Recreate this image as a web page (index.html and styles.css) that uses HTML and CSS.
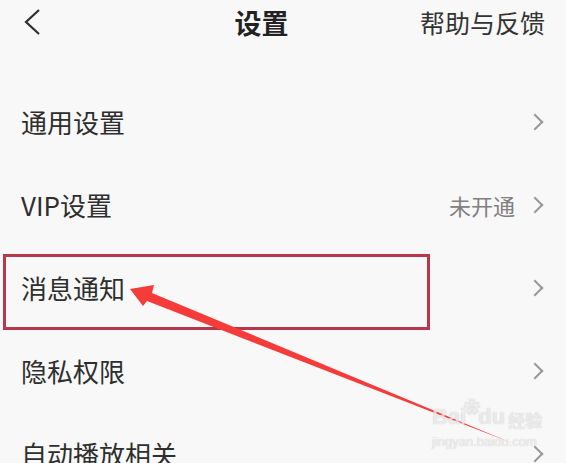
FILE: index.html
```html
<!DOCTYPE html>
<html lang="zh-CN">
<head>
<meta charset="UTF-8" />
<meta name="viewport" content="width=device-width, initial-scale=1" />
<title>设置</title>
<link rel="stylesheet" href="styles.css">
</head>
<body>

<div class="page">
  <header class="top-bar">
    <span class="back">
      <svg width="18" height="26" viewBox="0 0 18 26"><path d="M16 1 L3 13 L16 25" fill="none" stroke="#2e2e2e" stroke-width="2.2"/></svg>
    </span>
    <h1 class="title">设置</h1>
    <span class="help">帮助与反馈</span>
  </header>

  <ul class="menu">
    <li class="row"><span class="label">通用设置</span><span class="right"><i class="chev"></i></span></li>
    <li class="row"><span class="label">VIP设置</span><span class="right"><span class="note">未开通</span><i class="chev"></i></span></li>
    <li class="row marked"><span class="label">消息通知</span><span class="right"><i class="chev"></i></span>
      <div class="red-box"></div>
    </li>
    <li class="row"><span class="label">隐私权限</span><span class="right"><i class="chev"></i></span></li>
    <li class="row"><span class="label">自动播放相关</span><span class="right"><i class="chev"></i></span></li>
  </ul>

  <!-- annotation arrow -->
  <svg class="arrow" width="566" height="463" viewBox="0 0 566 463">
    <polygon points="130,289 154,285 152,293 512,443 147,301 143,306" fill="#f63b3b"/>
  </svg>

  <div class="watermark">
    <div class="wm-top"><span>Bai</span><span class="paw">❀</span><span>du</span><span class="wm-cn">经验</span></div>
    <div class="wm-url">jingyan.baidu.com</div>
  </div>
</div>

</body>
</html>
```

FILE: styles.css
```css
body {
  margin: 0;
  background: #f8f8f8;
  font-family: "Noto Sans CJK SC", "Noto Sans", sans-serif;
  color: #2e2e2e;
}
.page {
  position: relative;
  width: 566px;
  height: 463px;
  overflow: hidden;
}
.top-bar {
  display: grid;
  grid-template-columns: 18px 1fr auto;
  align-items: center;
  height: 44px;
  padding: 0 21px 0 23px;
}
.back {
  display: flex;
  align-items: center;
}
.title {
  margin: 0;
  padding-left: 62px;
  text-align: center;
  font-size: 27px;
  font-weight: 700;
  color: #222;
}
.help {
  font-size: 25px;
  color: #333;
}
.menu {
  list-style: none;
  margin: 0;
  padding: 36px 0 0;
}
.row {
  position: relative;
  display: flex;
  align-items: center;
  justify-content: space-between;
  height: 83px;
  padding: 0 21px 0 21px;
}
.label {
  font-size: 26px;
  color: #2e2e2e;
}
.right {
  display: flex;
  align-items: center;
  gap: 14px;
}
.note {
  font-size: 22px;
  color: #808080;
}
.chev {
  display: block;
  width: 10px;
  height: 10px;
  border-top: 2px solid #999;
  border-right: 2px solid #999;
  transform: rotate(45deg);
  margin-right: 4px;
}
.red-box {
  position: absolute;
  left: 3px;
  top: 8px;
  width: 421px;
  height: 70px;
  border: 3px solid #b8374a;
}
.arrow {
  position: absolute;
  left: 0;
  top: 0;
}
.watermark {
  position: absolute;
  left: 432px;
  top: 400px;
  color: rgba(255, 255, 255, 0.7);
  text-shadow: 0 0 1px rgba(0, 0, 0, 0.25);
  font-family: "Liberation Sans", sans-serif;
}
.wm-top {
  display: flex;
  align-items: flex-end;
  font-size: 22px;
  font-weight: 700;
  line-height: 1;
}
.paw {
  font-size: 16px;
  margin: 0 -2px 12px;
}
.wm-cn {
  font-family: "Noto Sans CJK SC", sans-serif;
  font-size: 17px;
  margin-left: 3px;
}
.wm-url {
  font-size: 13px;
  margin-top: 6px;
}
```
